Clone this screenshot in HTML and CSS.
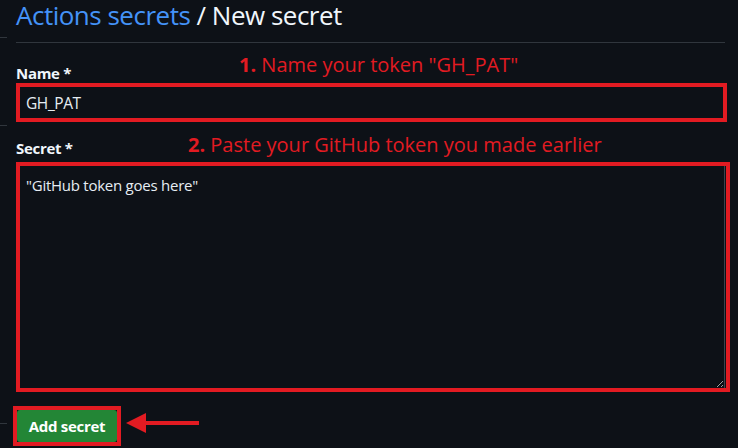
FILE: index.html
```html
<!DOCTYPE html>
<html lang="en">
<head>
<meta charset="utf-8">
<title>New secret</title>
<link rel="stylesheet" href="styles.css">
</head>
<body>
<main class="page">
  <h1 class="title"><span class="crumb">Actions secrets</span> / New secret</h1>
  <form class="form">
    <div class="field-head head-name">
      <label class="label" for="name">Name *</label>
      <p class="note"><b>1.</b> Name your token "GH_PAT"</p>
    </div>
    <div class="mark mark-input"><input class="input" id="name" value="GH_PAT"></div>
    <div class="field-head head-secret">
      <label class="label" for="secret">Secret *</label>
      <p class="note"><b>2.</b> Paste your GitHub token you made earlier</p>
    </div>
    <div class="mark mark-area"><textarea class="area" id="secret">"GitHub token goes here"</textarea></div>
    <div class="actions">
      <div class="mark mark-btn"><button class="btn" type="button">Add secret</button></div>
      <svg class="arrow" viewBox="0 0 74 22" width="74" height="22" aria-hidden="true">
        <polygon points="0,11 20,1 20,21" fill="#e21b22"/>
        <rect x="19" y="9" width="54" height="4" fill="#e21b22"/>
      </svg>
    </div>
  </form>
</main>
</body>
</html>
```

FILE: styles.css
```css
html {
  background: #0d1117;
}

body {
  margin: 0;
  min-height: 448px;
  color: #e6edf3;
  font-family: "Open Sans", "Noto Sans", sans-serif;
  background-color: #0d1117;
  background-image:
    linear-gradient(#30363d, #30363d),
    linear-gradient(#30363d, #30363d),
    linear-gradient(#30363d, #30363d);
  background-size: 7px 1px, 7px 1px, 7px 1px;
  background-position: 0 37px, 0 125px, 0 423px;
  background-repeat: no-repeat;
}

.page {
  padding-left: 16px;
  width: 714px;
}

.title {
  margin: 0;
  width: 709px;
  font-size: 26px;
  letter-spacing: -0.5px;
  line-height: 30px;
  font-weight: 400;
  padding-bottom: 12px;
  border-bottom: 1px solid #30363d;
  color: #f0f6fc;
}

.crumb {
  color: #4493f8;
}

.form {
  display: flex;
  flex-direction: column;
  align-items: flex-start;
}

.field-head {
  display: grid;
  align-items: end;
}

.head-name {
  grid-template-columns: 223px auto;
  margin-top: 9px;
}

.head-secret {
  grid-template-columns: 172px auto;
  margin-top: 10px;
}

.label {
  font-size: 15px;
  letter-spacing: -0.3px;
  line-height: 20px;
  font-weight: 700;
  color: #f0f6fc;
}

.head-secret .label {
  margin-bottom: 4px;
}

.note {
  margin: 0 0 5px;
  font-size: 20px;
  line-height: 26px;
  color: #e21b22;
  white-space: nowrap;
}

.head-secret .note {
  margin-bottom: 4px;
}

.note b {
  font-weight: 700;
}

.mark {
  border: 4px solid #e21b22;
}

.mark-input {
  width: 703px;
  height: 31px;
}

.input {
  box-sizing: border-box;
  width: 100%;
  height: 100%;
  margin: 0;
  padding: 0 6px;
  border: 0;
  background: transparent;
  color: #e6edf3;
  font-family: "Open Sans", "Noto Sans", sans-serif;
  font-size: 15.5px;
  letter-spacing: -0.4px;
  outline: none;
}

.mark-area {
  width: 706px;
  height: 222px;
}

.area {
  display: block;
  box-sizing: border-box;
  width: 705px;
  height: 222px;
  margin: 0;
  padding: 8px 6px;
  border: 0;
  border-right: 1px solid #3d444d;
  background: transparent;
  color: #e6edf3;
  font-family: "Open Sans", "Noto Sans", sans-serif;
  font-size: 15px;
  letter-spacing: -0.25px;
  line-height: 22px;
  resize: vertical;
  outline: none;
}

.actions {
  display: flex;
  align-items: flex-start;
  margin-top: 14px;
  margin-left: -3px;
}

.mark-btn {
  width: 100px;
  height: 32px;
}

.btn {
  display: block;
  width: 100px;
  height: 32px;
  margin: 0;
  padding: 0;
  border: 0;
  border-radius: 3px;
  background: #238636;
  color: #ffffff;
  font-family: "Open Sans", "Noto Sans", sans-serif;
  font-size: 15px;
  letter-spacing: -0.3px;
  font-weight: 700;
}

.arrow {
  display: block;
  margin-top: 6px;
  margin-left: 5px;
}
```
